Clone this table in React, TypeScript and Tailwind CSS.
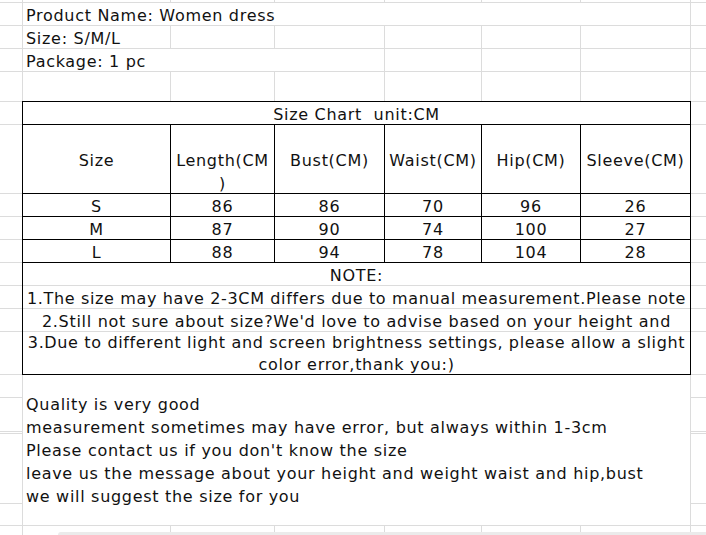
import React from "react";

const ROWS = [
  "row-start-1",
  "row-start-2",
  "row-start-3",
  "row-start-4",
  "row-start-5",
  "row-start-6",
  "row-start-7",
  "row-start-8",
  "row-start-9",
  "row-start-10",
  "row-start-11",
  "row-start-12",
  "row-start-13",
  "row-start-14",
  "row-start-15",
  "row-start-16",
  "row-start-17",
  "row-start-18",
  "row-start-19",
  "row-start-20",
];
const COLS = [
  "col-start-1",
  "col-start-2",
  "col-start-3",
  "col-start-4",
  "col-start-5",
  "col-start-6",
  "col-start-7",
  "col-start-8",
];

const G = "border-[#dcdcdc]";

function Blank({ c, r, last }: { c: number; r: number; last?: boolean }) {
  const rb = c === 7 ? "" : "border-r";
  const bb = last ? "" : "border-b";
  return <div className={`${COLS[c]} ${ROWS[r]} ${rb} ${bb} ${G} bg-white`} />;
}

const tableCols = "grid grid-cols-[148px_104px_110px_97px_99px_109px]";

const data = [
  ["S", "86", "86", "70", "96", "26"],
  ["M", "87", "90", "74", "100", "27"],
  ["L", "88", "94", "78", "104", "28"],
];

export default function App() {
  const blanks: React.ReactNode[] = [];
  for (let c = 0; c < 8; c++) blanks.push(<Blank key={`r0c${c}`} c={c} r={0} />);
  for (let r = 1; r < 19; r++) {
    blanks.push(<Blank key={`g0-${r}`} c={0} r={r} />);
    blanks.push(<Blank key={`g7-${r}`} c={7} r={r} />);
  }
  for (let c = 2; c < 7; c++) blanks.push(<Blank key={`r2c${c}`} c={c} r={2} />);
  for (let c = 4; c < 7; c++) blanks.push(<Blank key={`r3c${c}`} c={c} r={3} />);
  for (let c = 1; c < 7; c++) blanks.push(<Blank key={`r4c${c}`} c={c} r={4} />);
  for (let c = 0; c < 8; c++) blanks.push(<Blank key={`r19c${c}`} c={c} r={19} last />);

  return (
    <div className="relative w-[706px] h-[535px] overflow-hidden bg-white text-[16px] tracking-[0.7px] text-[#111] font-['DejaVu_Sans',_Verdana,_sans-serif]">
      <div className="grid grid-cols-[23px_148px_104px_110px_97px_99px_110px_15px] grid-rows-[3px_23px_23px_23px_30px_23px_69px_23px_23px_23px_23px_23px_23px_43px_23px_34px_2px_70px_22px_9px]">
        {blanks}

        <div className={`col-start-2 col-span-6 row-start-2 border-r border-b ${G} flex items-end pl-[3px] leading-[19px] whitespace-nowrap`}>
          Product Name: Women dress
        </div>
        <div className={`col-start-2 row-start-3 border-r border-b ${G} flex items-end pl-[3px] leading-[19px] whitespace-nowrap`}>
          Size: S/M/L
        </div>
        <div className={`col-start-2 col-span-3 row-start-4 border-r border-b ${G} flex items-end pl-[3px] leading-[19px] whitespace-nowrap`}>
          Package: 1 pc
        </div>

        <div className={`col-start-2 col-span-6 row-start-15 row-span-5 border-r border-b ${G} bg-white pt-[18px] pl-[3px] leading-[23px] whitespace-nowrap`}>
          <div>Quality is very good</div>
          <div>measurement sometimes may have error, but always within 1-3cm</div>
          <div>Please contact us if you don't know the size</div>
          <div>leave us the message about your height and weight waist and hip,bust</div>
          <div>we will suggest the size for you</div>
        </div>

        <div className="col-start-2 col-span-6 row-start-6 row-span-9 -ml-px -mt-px border border-black bg-white flex flex-col">
          <div className="h-[23px] border-b border-black flex items-end justify-center leading-[19px] whitespace-pre">
            Size Chart  unit:CM
          </div>
          <div className={`${tableCols} h-[69px] border-b border-black`}>
            {["Size", "Length(CM", "Bust(CM)", "Waist(CM)", "Hip(CM)", "Sleeve(CM)"].map((h, i) => (
              <div
                key={h}
                className={`${i < 5 ? "border-r border-black" : ""} pt-[24px] leading-[23px] text-center whitespace-nowrap`}
              >
                {i === 1 ? (
                  <>
                    <div>Length(CM</div>
                    <div>)</div>
                  </>
                ) : (
                  h
                )}
              </div>
            ))}
          </div>
          {data.map((row) => (
            <div key={row[0]} className={`${tableCols} h-[23px] border-b border-black`}>
              {row.map((v, i) => (
                <div
                  key={i}
                  className={`${i < 5 ? "border-r border-black" : ""} flex items-end justify-center leading-[19px]`}
                >
                  {v}
                </div>
              ))}
            </div>
          ))}
          <div className={`h-[23px] border-b ${G} flex items-end justify-center leading-[19px] whitespace-nowrap`}>
            NOTE:
          </div>
          <div className={`h-[23px] border-b ${G} flex items-end justify-center leading-[19px] whitespace-nowrap tracking-[0.64px]`}>
            1.The size may have 2-3CM differs due to manual measurement.Please note
          </div>
          <div className={`h-[23px] border-b ${G} flex items-end justify-center leading-[19px] whitespace-nowrap`}>
            2.Still not sure about size?We'd love to advise based on your height and
          </div>
          <div className="h-[42px] flex flex-col items-center leading-[22px] whitespace-nowrap">
            <div className="tracking-[0.64px]">3.Due to different light and screen brightness settings, please allow a slight</div>
            <div>color error,thank you:)</div>
          </div>
        </div>
      </div>
      <div className="absolute left-[58px] right-0 bottom-0 h-[3px] bg-[#ebebeb] rounded-tl-sm" />
    </div>
  );
}
